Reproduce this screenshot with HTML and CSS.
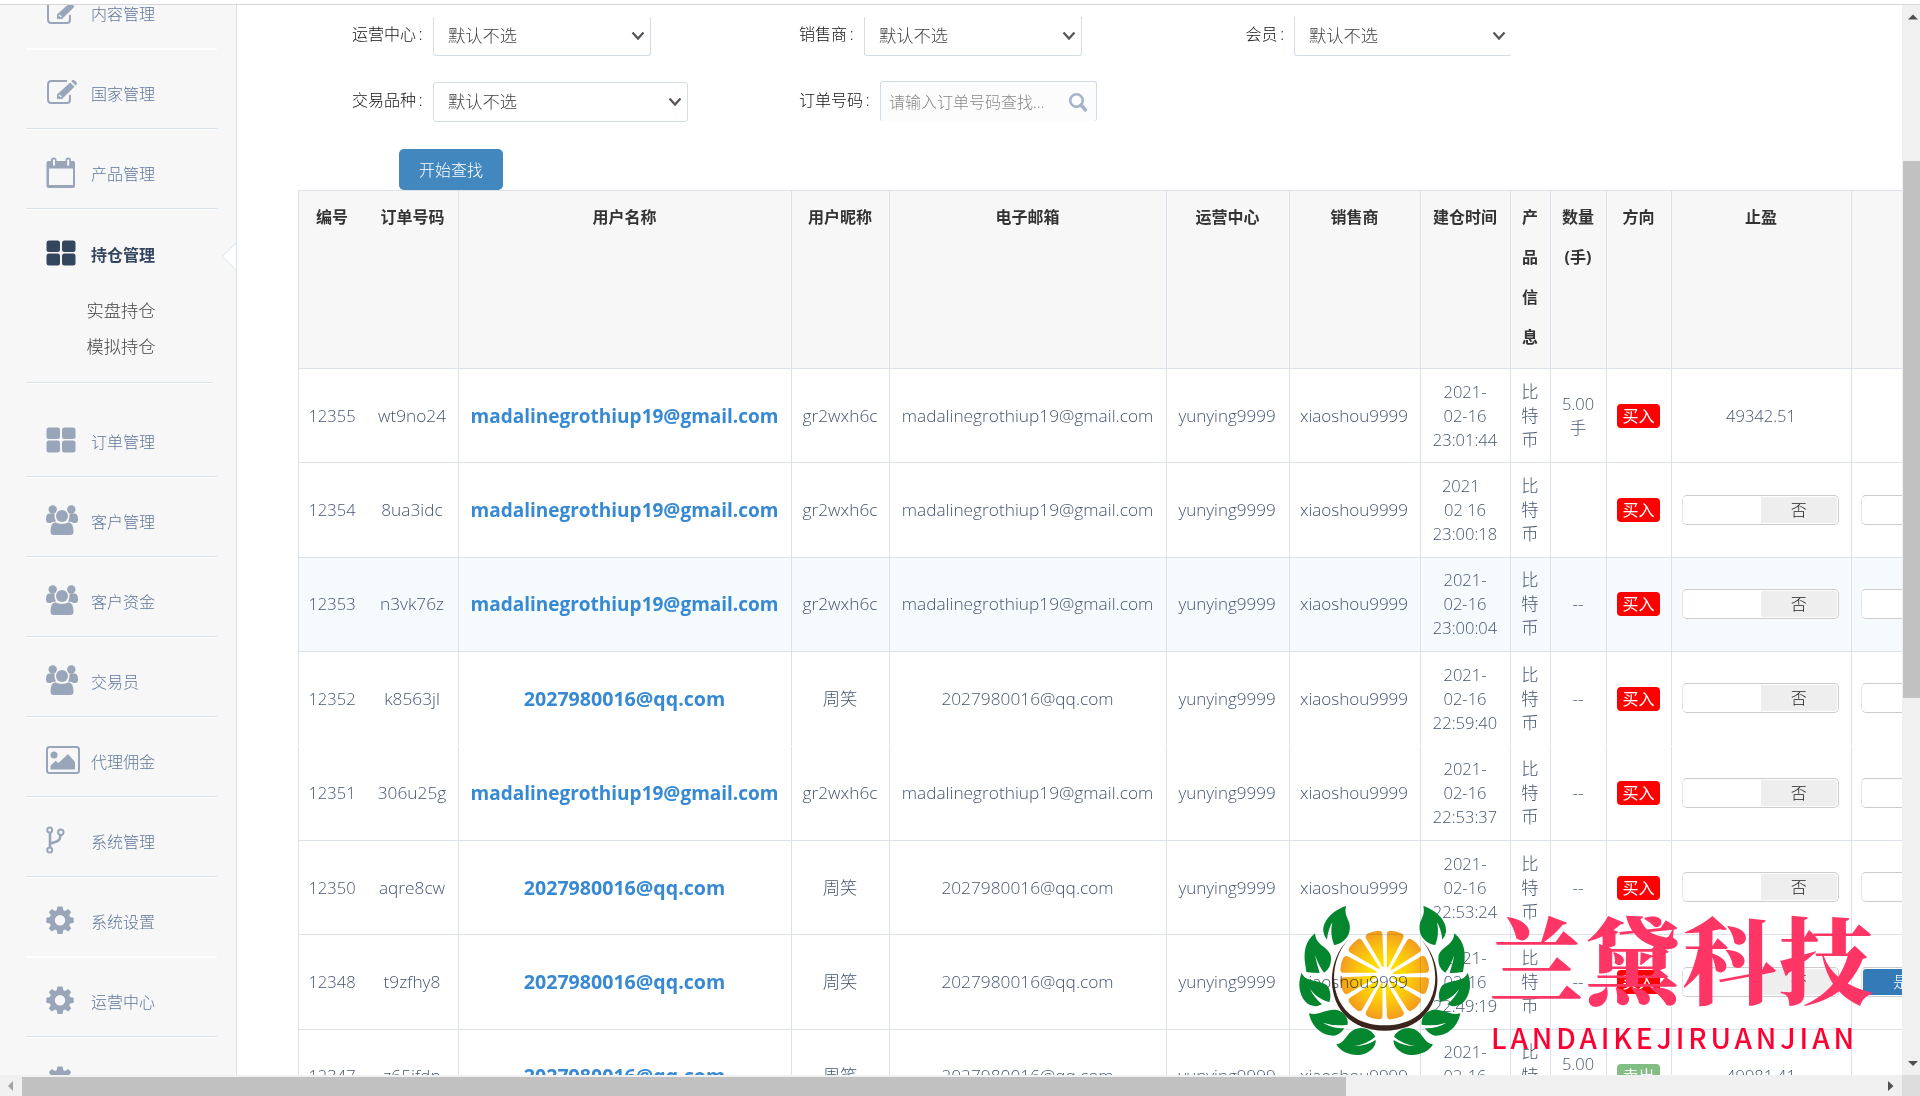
FILE: index.html
```html
<!DOCTYPE html>
<html lang="zh-CN">
<head>
<meta charset="utf-8">
<title>持仓管理</title>
<link rel="stylesheet" href="styles.css">
</head>
<body>
<svg class="defs" width="0" height="0" aria-hidden="true">
  <symbol id="i-edit" viewBox="0 0 32 26"><path d="M21 2H5.500Q2 2 2 5.500v15Q2 24 5.500 24h15.500Q24 24 24 20.500v-4.500" fill="none" stroke="currentColor" stroke-width="2"/><path d="M11 15.500 24.200 3.500l4.300 4.300L16 20h-5zM25.300 2.300l1-1q1-.8 2 0l2.300 2.300q.8 1 0 2l-1 1z" fill="currentColor"/><path d="m13.200 16 2 2" stroke="#f7f7f7" stroke-width="1.300"/></symbol>
  <symbol id="i-cal" viewBox="0 0 30 31"><path fill="currentColor" fill-rule="evenodd" d="M2.500 4H5V3q0-2.500 2.800-2.500T10.500 3v1h9V3q0-2.500 2.700-2.500T25 3v1h2.500Q29 4 29 6v23q0 2-2 2H2.500q-2 0-2-2V6q0-2 2-2zM3 11.500V28h24V11.500zM7 2.500v6h2v-6zM21.200 2.500v6h2v-6z"/></symbol>
  <symbol id="i-grid" viewBox="0 0 30 26"><g fill="currentColor"><rect x=".5" y=".5" width="13.500" height="11.500" rx="2.500"/><rect x="16" y=".5" width="13.500" height="11.500" rx="2.500"/><rect x=".5" y="13.500" width="13.500" height="12" rx="2.500"/><rect x="16" y="13.500" width="13.500" height="12" rx="2.500"/></g></symbol>
  <symbol id="i-group" viewBox="0 0 32 30"><g fill="currentColor"><circle cx="6.700" cy="4.500" r="4.200"/><circle cx="25.300" cy="4.500" r="4.200"/><circle cx="16" cy="11" r="6"/><path d="M3 8.500h5.500q-.5 5 1.500 8Q6 16.500 5 18H3Q0 18 0 14.500 0 9 3 8.500zM29 8.500h-5.500q.5 5-1.500 8 4 0 5 1.500h2q3 0 3-3.500 0-5.500-3-6zM9 17.200q7 3.500 14 0 4.500 1.300 4.500 9.300 0 3.500-3.500 3.500H8q-3.500 0-3.500-3.500 0-8 4.500-9.300z"/></g></symbol>
  <symbol id="i-pic" viewBox="0 0 34 28"><rect x="1" y="1" width="32" height="26" rx="2.500" fill="none" stroke="currentColor" stroke-width="2"/><circle cx="8" cy="9" r="3.500" fill="currentColor"/><path fill="currentColor" d="M4.500 23.500v-3.700l5-5 3 2.200L22 8l7 8v7.500z"/></symbol>
  <symbol id="i-fork" viewBox="0 0 19 28"><g fill="none" stroke="currentColor" stroke-width="2"><circle cx="3.700" cy="4" r="2.500"/><circle cx="14.800" cy="6.200" r="2.700"/><circle cx="3.700" cy="24" r="2.500"/><path stroke-width="2.600" d="M4 7v14.500M4.500 17.500c7-2.500 9.500-2 10-8.500"/></g></symbol>
  <symbol id="i-gear" viewBox="0 0 28 28"><path fill="currentColor" fill-rule="evenodd" d="M11.500 0.500h5l.8 3.700 1.700.8 3.200-2 3 3-2 3.200.8 1.800 3.700.7v5l-3.700.7-.8 1.800 2 3.200-3 3-3.200-2-1.700.8-.8 3.700h-5l-.8-3.700-1.700-.8-3.200 2-3-3 2-3.200-.8-1.800-3.700-.7v-5l3.700-.7.800-1.800-2-3.200 3-3 3.200 2 1.700-.8zM14 9a5.200 5.200 0 1 0 0 10.400A5.200 5.200 0 1 0 14 9z"/></symbol>
  <symbol id="i-chev" viewBox="0 0 14 10"><path d="m1.500 1.500 5.500 6 5.500-6" fill="none" stroke="#555" stroke-width="2.200"/></symbol>
</svg>
<div class="top"></div>
<div class="view">
  <nav class="side">
    <a class="item faint"><svg width="32" height="26"><use href="#i-edit"/></svg>内容管理</a>
    <a class="item"><svg width="32" height="26"><use href="#i-edit"/></svg>国家管理</a>
    <a class="item"><svg width="30" height="31"><use href="#i-cal"/></svg>产品管理</a>
    <div class="open">
      <a class="item active"><svg width="30" height="26"><use href="#i-grid"/></svg>持仓管理</a>
      <a class="sub">实盘持仓</a>
      <a class="sub">模拟持仓</a>
      <svg class="notch" width="16" height="30" viewBox="0 0 16 30"><path d="M16 0 1 14.500 16 29z" fill="#fff"/><path d="M15.500 .5 1 14.500l14.500 14" fill="none" stroke="#d9e1ea"/></svg>
    </div>
    <a class="item late"><svg width="30" height="26"><use href="#i-grid"/></svg>订单管理</a>
    <a class="item"><svg width="32" height="30"><use href="#i-group"/></svg>客户管理</a>
    <a class="item"><svg width="32" height="30"><use href="#i-group"/></svg>客户资金</a>
    <a class="item"><svg width="32" height="30"><use href="#i-group"/></svg>交易员</a>
    <a class="item"><svg width="34" height="28"><use href="#i-pic"/></svg>代理佣金</a>
    <a class="item"><svg width="19" height="28"><use href="#i-fork"/></svg>系统管理</a>
    <a class="item faint"><svg width="28" height="28"><use href="#i-gear"/></svg>系统设置</a>
    <a class="item"><svg width="28" height="28"><use href="#i-gear"/></svg>运营中心</a>
    <a class="item"><svg width="28" height="28"><use href="#i-gear"/></svg></a>
  </nav>
  <main class="main">
    <form class="filters">
      <div class="field"><label class="w4">运营中心&thinsp;:</label><div class="select cut">默认不选<svg width="14" height="10"><use href="#i-chev"/></svg></div></div>
      <div class="field"><label class="w3">销售商&thinsp;:</label><div class="select cut">默认不选<svg width="14" height="10"><use href="#i-chev"/></svg></div></div>
      <div class="field"><label class="w2">会员&thinsp;:</label><div class="select cut edge">默认不选<svg width="14" height="10"><use href="#i-chev"/></svg></div></div>
      <div class="field"><label class="w4">交易品种&thinsp;:</label><div class="select wide">默认不选<svg width="14" height="10"><use href="#i-chev"/></svg></div></div>
      <div class="field"><label class="w4">订单号码&thinsp;:</label><div class="search">请输入订单号码查找...<svg width="20" height="20" viewBox="0 0 20 20"><circle cx="8.500" cy="8.500" r="6.300" fill="none" stroke="#a3b4cb" stroke-width="2.600"/><path d="m13 13 4.500 5" stroke="#a3b4cb" stroke-width="3.400" stroke-linecap="round"/></svg></div></div>
    </form>
    <button class="go">开始查找</button>
    <div class="table">
      <div class="row head"><div>编号</div><div>订单号码</div><div>用户名称</div><div>用户昵称</div><div>电子邮箱</div><div>运营中心</div><div>销售商</div><div>建仓时间</div><div>产品信息</div><div>数量(手)</div><div>方向</div><div>止盈</div><div></div></div>
      <div class="row"><div class="n">12355</div><div>wt9no24</div><div class="user">madalinegrothiup19@gmail.com</div><div>gr2wxh6c</div><div>madalinegrothiup19@gmail.com</div><div class="y">yunying9999</div><div class="y">xiaoshou9999</div><div class="n">2021-<br>02-16<br>23:01:44</div><div>比特币</div><div class="n">5.00<br>手</div><div><span class="tag">买入</span></div><div class="n">49342.51</div><div></div></div>
      <div class="row"><div class="n">12354</div><div>8ua3idc</div><div class="user">madalinegrothiup19@gmail.com</div><div>gr2wxh6c</div><div>madalinegrothiup19@gmail.com</div><div class="y">yunying9999</div><div class="y">xiaoshou9999</div><div class="n">2021&nbsp;&nbsp;<br>02 16<br>23:00:18</div><div>比特币</div><div></div><div><span class="tag">买入</span></div><div><span class="switch"><i></i><b>否</b></span></div><div><span class="switch"><i></i><b></b></span></div></div>
      <div class="row hover"><div class="n">12353</div><div>n3vk76z</div><div class="user">madalinegrothiup19@gmail.com</div><div>gr2wxh6c</div><div>madalinegrothiup19@gmail.com</div><div class="y">yunying9999</div><div class="y">xiaoshou9999</div><div class="n">2021-<br>02-16<br>23:00:04</div><div>比特币</div><div>--</div><div><span class="tag">买入</span></div><div><span class="switch"><i></i><b>否</b></span></div><div><span class="switch"><i></i><b></b></span></div></div>
      <div class="row"><div class="n">12352</div><div>k8563jl</div><div class="user qq">2027980016@qq.com</div><div>周笑</div><div>2027980016@qq.com</div><div class="y">yunying9999</div><div class="y">xiaoshou9999</div><div class="n">2021-<br>02-16<br>22:59:40</div><div>比特币</div><div>--</div><div><span class="tag">买入</span></div><div><span class="switch"><i></i><b>否</b></span></div><div><span class="switch"><i></i><b></b></span></div></div>
      <div class="row joined"><div class="n">12351</div><div>306u25g</div><div class="user">madalinegrothiup19@gmail.com</div><div>gr2wxh6c</div><div>madalinegrothiup19@gmail.com</div><div class="y">yunying9999</div><div class="y">xiaoshou9999</div><div class="n">2021-<br>02-16<br>22:53:37</div><div>比特币</div><div>--</div><div><span class="tag">买入</span></div><div><span class="switch"><i></i><b>否</b></span></div><div><span class="switch"><i></i><b></b></span></div></div>
      <div class="row"><div class="n">12350</div><div>aqre8cw</div><div class="user qq">2027980016@qq.com</div><div>周笑</div><div>2027980016@qq.com</div><div class="y">yunying9999</div><div class="y">xiaoshou9999</div><div class="n">2021-<br>02-16<br>22:53:24</div><div>比特币</div><div>--</div><div><span class="tag">买入</span></div><div><span class="switch"><i></i><b>否</b></span></div><div><span class="switch"><i></i><b></b></span></div></div>
      <div class="row"><div class="n">12348</div><div>t9zfhy8</div><div class="user qq">2027980016@qq.com</div><div>周笑</div><div>2027980016@qq.com</div><div class="y">yunying9999</div><div class="y">xiaoshou9999</div><div class="n">2021-<br>02-16<br>22:49:19</div><div>比特币</div><div>--</div><div><span class="tag">买入</span></div><div><span class="switch"><i></i><b>否</b></span></div><div><span class="switch on"><b>是</b><i></i></span></div></div>
      <div class="row"><div class="n">12347</div><div>z65ifdp</div><div class="user qq">2027980016@qq.com</div><div>周笑</div><div>2027980016@qq.com</div><div class="y">yunying9999</div><div class="y">xiaoshou9999</div><div class="n">2021-<br>02-16<br>22:48:02</div><div>比特币</div><div class="n">5.00<br>手</div><div><span class="tag sell">卖出</span></div><div class="n">49981.41</div><div></div></div>
    </div>
  </main>
  <div class="vbar">
    <svg width="18" height="24" viewBox="0 0 18 24"><path d="M6 14.500 11 9.500l5 5z" fill="#505050"/></svg>
    <div class="vthumb"></div>
    <svg width="18" height="24" viewBox="0 0 18 24"><path d="M6 10l5 5 5-5z" fill="#505050"/></svg>
  </div>
</div>
<div class="hbar">
  <svg width="22" height="21" viewBox="0 0 22 21"><path d="M13 6v10L8 11z" fill="#a3a3a3"/></svg>
  <div class="hthumb"></div>
  <svg class="right" width="22" height="21" viewBox="0 0 22 21"><path d="M8 6v10l5.500-5z" fill="#505050"/></svg>
  <div class="corner"></div>
</div>
<div class="mark">
  <svg width="171" height="150" viewBox="27 45 513 450">
    <defs>
      <radialGradient id="pulp" gradientUnits="userSpaceOnUse" cx="284" cy="255" r="136"><stop offset=".35" stop-color="#ffdc00"/><stop offset=".65" stop-color="#fbc010"/><stop offset="1" stop-color="#f29a20"/></radialGradient>
      <path id="wedge" d="M290.500 230V133q0-11 11-11 18 1 32 8 11 5 6 15l-44 85q-4 4-5 0z" fill="url(#pulp)"/>
      <g id="leaves">
        <path fill="#04862f" d="M168 48C130 60 97 92 100 125q2 13 11 24 3-30 16-52-8 35 5 68c30-4 54-30 46-66-7-20-15-27-10-51z"/>
        <path fill="#04862f" d="M75 130C44 155 40 190 46 225l3 21q18 3 40 3-9-28-14-54 12 34 27 53c16-8 24-30 20-52-10-28-44-28-47-66z"/>
        <path fill="#04862f" d="M35 248C20 285 30 325 55 343q14 7 28 5 8-3 13-5-22-18-36-46 22 30 58 40c6-20 4-38-8-52-28-18-64-8-75-37z"/>
        <path fill="#04862f" d="M57 370c6 38 38 68 76 67q18-3 30-22-36 1-64-17 36 12 74 6c2-20-8-32-22-40-34-16-60 16-94 6z"/>
        <path fill="#04862f" d="M139 463c16 30 64 40 92 25 18-8 28-25 26-38q-28 18-64 18 38-6 63-28c-12-22-36-30-56-24-30 8-34 44-61 47z"/>
      </g>
    </defs>
    <g class="fruit">
      <use href="#wedge" transform="rotate(0 284 255)"/><use href="#wedge" transform="rotate(30 284 255)"/><use href="#wedge" transform="rotate(60 284 255)"/><use href="#wedge" transform="rotate(90 284 255)"/><use href="#wedge" transform="rotate(120 284 255)"/><use href="#wedge" transform="rotate(150 284 255)"/><use href="#wedge" transform="rotate(180 284 255)"/><use href="#wedge" transform="rotate(210 284 255)"/><use href="#wedge" transform="rotate(240 284 255)"/><use href="#wedge" transform="rotate(270 284 255)"/><use href="#wedge" transform="rotate(300 284 255)"/><use href="#wedge" transform="rotate(330 284 255)"/>
    </g>
    <path fill="#3a241b" d="M175 149C90 228 108 422 284 422S478 228 393 149C468 228 452 406 284 406S100 228 175 149z"/>
    <use href="#leaves"/><use href="#leaves" transform="translate(568 0) scale(-1 1)"/>
  </svg>
  <div class="brand"><strong>兰黛科技</strong><em>LANDAIKEJIRUANJIAN</em></div>
</div>
</body>
</html>
```
FILE: styles.css
```css
* { box-sizing: border-box; }
body {
  margin: 0;
  width: 1920px;
  height: 1096px;
  overflow: hidden;
  background: #fff;
  font: 300 16px/24px "Open Sans", "Noto Sans CJK SC", sans-serif;
}
.defs { position: absolute; }
.top { height: 5px; border-bottom: 1px solid #d8d8dc; }
.view { display: flex; height: 1070px; overflow: hidden; }

/* sidebar */
.side {
  flex: none;
  width: 237px;
  height: 1070px;
  overflow: hidden;
  background: #f7f7f7;
  border-right: 1px solid #d9e1ea;
  display: flex;
  flex-direction: column;
}
.item {
  flex: none;
  display: grid;
  grid-template-columns: 45px auto;
  align-items: center;
  height: 80px;
  margin: 0 19px 0 26px;
  padding: 11px 0 0 20px;
  border-bottom: 1px solid #d9e1ec;
  box-shadow: 0 1px #fff;
  color: #5f7799;
}
.item svg { color: #99a6b9; margin-top: -4px; }
.item:first-child { margin-top: -36px; }
.item.faint { border-bottom-color: #fdfdfd; }
.open {
  flex: none;
  position: relative;
  height: 174px;
  margin: 0 23px 0 26px;
  border-bottom: 1px solid #d9e1ec;
  box-shadow: 0 1px #fff;
}
.item.active { margin: 0; border: 0; box-shadow: none; height: 84px; color: #34465e; font-weight: 700; padding-top: 7px; }
.item.active svg { color: #34465e; }
.sub { display: block; padding-left: 60.500px; height: 36px; line-height: 36px; font-size: 17.300px; color: #444; }
.notch { position: absolute; left: 195px; top: 33px; }
.item.late { height: 94px; padding-top: 25px; }

/* filter form */
.main { flex: none; width: 1665px; height: 1070px; overflow: hidden; }
.filters {
  display: grid;
  grid-template-columns: 447px 446.500px 300px;
  row-gap: 26px;
  padding: 11px 0 0 115px;
}
.field { display: flex; height: 40px; }
label { flex: none; color: #111; line-height: 36px; }
.w4 { width: 81px; }
.w3 { width: 65px; }
.w2 { width: 48.500px; }
.select {
  display: flex;
  align-items: center;
  justify-content: space-between;
  width: 218px;
  height: 40px;
  padding: 0 5px 0 14px;
  border: 1px solid #d3dde8;
  border-radius: 3px;
  font-size: 17.300px;
  color: #444;
}
.select.cut { border-top-color: transparent; }
.select.edge { border-right-color: transparent; }
.select.wide { width: 255px; }
.search {
  display: flex;
  align-items: center;
  justify-content: space-between;
  width: 217px;
  height: 40px;
  margin-top: -1px;
  padding: 0 8px;
  border: 1px solid #cfdbe8;
  border-bottom: 0;
  border-radius: 3px;
  background: #fcfcfc;
  color: #888;
}
.go {
  display: block;
  width: 104px;
  height: 41px;
  margin: 27px 0 0 162px;
  padding: 0;
  border: 0;
  border-radius: 5px;
  background: #4287be;
  color: #fff;
  font: inherit;
}

/* orders */
.table { margin-left: 61px; width: 1733px; }
.row {
  display: grid;
  grid-template-columns: 68px 92px 333px 98px 277px 123px 131px 90px 40px 56px 65px 180px 180px;
  height: 94.400px;
  border-top: 1px solid #dde1e9;
  color: #45556e;
  font-size: 17.300px;
}
.row > div {
  align-content: center;
  text-align: center;
  padding: 0 10px 0 9px;
  border-left: 1px solid #dde1e9;
}
.row > div:nth-child(2) { border-left-color: transparent; }
.row > .n { padding: 0 1px 0 0; font-size: 16.500px; }
.row > .y { font-size: 17px; padding: 0 2px 0 0; }
.row > .user { font-size: 19px; font-weight: 700; color: #3689d2; padding: 0 1px 0 0; }
.row > .user.qq { font-size: 19.600px; }
.row > div:nth-child(2), .row > div:nth-child(4), .row > div:nth-child(5) { padding: 0 1px 0 0; }
.row > div:nth-child(11) { padding: 0 10px; }
.row.hover { background: #f5fafd; }
.row.joined { border-top-color: transparent; }
.row.head {
  height: 178px;
  background: #f7f7f7;
  color: #333;
  font-size: 16px;
  font-weight: 700;
  line-height: 40px;
}
.row.head > div { align-content: start; padding: 6px 10px 0 9px; }
.row.head > div:nth-child(2) { padding: 6px 0 0; }
.tag { display: block; width: 43px; border-radius: 4px; background: #f00; color: #fff; font-size: 16px; line-height: 24px; font-weight: 400; }
.row .tag.sell { background: #82bd84; }
.switch {
  display: grid;
  grid-template-columns: 1fr 1fr;
  width: 157px;
  height: 30px;
  padding: 1px;
  margin: -1px 0 0 1px;
  border: 1px solid #ccc;
  border-left-color: #e4e4e4;
  border-radius: 5px;
  background: #fff;
  font-size: 16px;
  line-height: 26px;
  color: #222;
}
.row > div:nth-child(13) > .switch { margin-left: 0; }
.switch b { background: #eee; font-weight: 300; border-radius: 0 3px 3px 0; }
.switch.on b { background: #337ab7; color: #fff; border-radius: 3px 0 0 3px; }

/* scrollbars */
.vbar { display: flex; flex-direction: column; width: 18px; height: 1070px; background: #f0f0f0; }
.vthumb { width: 17px; height: 537px; margin: 132px 0 auto 1px; background: #c1c1c1; }
.hbar { display: flex; align-items: flex-end; height: 21px; background: #f0f0f0; }
.hthumb { width: 1324px; height: 19px; background: #c1c1c1; }
.right { margin-left: auto; }
.corner { width: 18px; height: 21px; background: #dcdcdc; }

/* floating company mark */
.mark { position: absolute; left: 1299px; top: 905px; display: flex; gap: 19px; }
.mark svg { flex: none; }
.fruit { mix-blend-mode: multiply; }
.brand { margin-top: -3px; }
.brand strong {
  display: block;
  font: 900 94px/110px "Noto Serif CJK SC", serif;
  letter-spacing: 2.600px;
  color: #ff3566;
  white-space: nowrap;
}
.brand em {
  display: block;
  margin-left: 2px;
  font: 500 28px/50px "Noto Sans CJK SC", sans-serif;
  letter-spacing: 3.900px;
  color: #ff0033;
}
```
